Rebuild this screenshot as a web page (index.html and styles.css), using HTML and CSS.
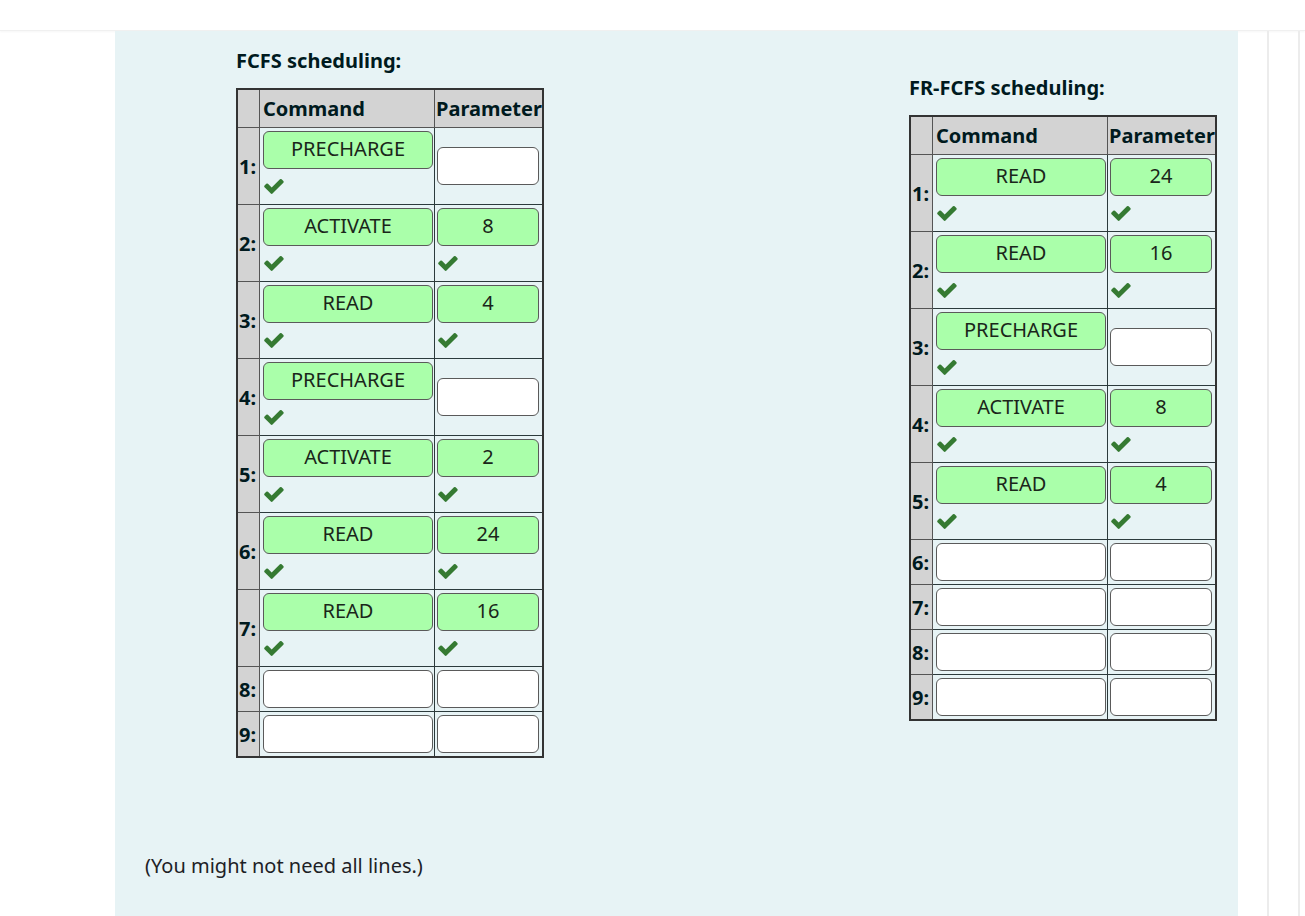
FILE: index.html
```html
<!DOCTYPE html>
<html lang="en">
<head>
<meta charset="utf-8">
<title>Scheduling</title>
<link rel="stylesheet" href="styles.css">
</head>
<body>
<svg class="defs" width="0" height="0" aria-hidden="true">
  <symbol id="chk" viewBox="120 260 1560 1270">
    <path d="M1671 566q0 40-28 68l-724 724-136 136q-28 28-68 28t-68-28l-136-136-362-362q-28-28-28-68t28-68l136-136q28-28 68-28t68 28l294 295 656-657q28-28 68-28t68 28l136 136q28 28 28 68z"/>
  </symbol>
</svg>
<div class="topbar"></div>
<div class="main">
  <div class="gutter"></div>
  <div class="panel">
    <div class="blocks">
      <div class="block block-left">
        <div class="title">FCFS scheduling:</div>
        <table class="sched">
          <tr><th class="num"></th><th class="cmdh">Command</th><th class="parh">Parameter</th></tr>
          <tr><td class="num">1:</td>
            <td class="cmd"><div class="inp ok">PRECHARGE</div><div class="chk"><svg><use href="#chk"/></svg></div></td>
            <td class="par"><div class="inp"></div></td></tr>
          <tr><td class="num">2:</td>
            <td class="cmd"><div class="inp ok">ACTIVATE</div><div class="chk"><svg><use href="#chk"/></svg></div></td>
            <td class="par"><div class="inp ok">8</div><div class="chk"><svg><use href="#chk"/></svg></div></td></tr>
          <tr><td class="num">3:</td>
            <td class="cmd"><div class="inp ok">READ</div><div class="chk"><svg><use href="#chk"/></svg></div></td>
            <td class="par"><div class="inp ok">4</div><div class="chk"><svg><use href="#chk"/></svg></div></td></tr>
          <tr><td class="num">4:</td>
            <td class="cmd"><div class="inp ok">PRECHARGE</div><div class="chk"><svg><use href="#chk"/></svg></div></td>
            <td class="par"><div class="inp"></div></td></tr>
          <tr><td class="num">5:</td>
            <td class="cmd"><div class="inp ok">ACTIVATE</div><div class="chk"><svg><use href="#chk"/></svg></div></td>
            <td class="par"><div class="inp ok">2</div><div class="chk"><svg><use href="#chk"/></svg></div></td></tr>
          <tr><td class="num">6:</td>
            <td class="cmd"><div class="inp ok">READ</div><div class="chk"><svg><use href="#chk"/></svg></div></td>
            <td class="par"><div class="inp ok">24</div><div class="chk"><svg><use href="#chk"/></svg></div></td></tr>
          <tr><td class="num">7:</td>
            <td class="cmd"><div class="inp ok">READ</div><div class="chk"><svg><use href="#chk"/></svg></div></td>
            <td class="par"><div class="inp ok">16</div><div class="chk"><svg><use href="#chk"/></svg></div></td></tr>
          <tr><td class="num">8:</td><td class="cmd"><div class="inp"></div></td><td class="par"><div class="inp"></div></td></tr>
          <tr><td class="num">9:</td><td class="cmd"><div class="inp"></div></td><td class="par"><div class="inp"></div></td></tr>
        </table>
      </div>
      <div class="block block-right">
        <div class="title">FR-FCFS scheduling:</div>
        <table class="sched">
          <tr><th class="num"></th><th class="cmdh">Command</th><th class="parh">Parameter</th></tr>
          <tr><td class="num">1:</td>
            <td class="cmd"><div class="inp ok">READ</div><div class="chk"><svg><use href="#chk"/></svg></div></td>
            <td class="par"><div class="inp ok">24</div><div class="chk"><svg><use href="#chk"/></svg></div></td></tr>
          <tr><td class="num">2:</td>
            <td class="cmd"><div class="inp ok">READ</div><div class="chk"><svg><use href="#chk"/></svg></div></td>
            <td class="par"><div class="inp ok">16</div><div class="chk"><svg><use href="#chk"/></svg></div></td></tr>
          <tr><td class="num">3:</td>
            <td class="cmd"><div class="inp ok">PRECHARGE</div><div class="chk"><svg><use href="#chk"/></svg></div></td>
            <td class="par"><div class="inp"></div></td></tr>
          <tr><td class="num">4:</td>
            <td class="cmd"><div class="inp ok">ACTIVATE</div><div class="chk"><svg><use href="#chk"/></svg></div></td>
            <td class="par"><div class="inp ok">8</div><div class="chk"><svg><use href="#chk"/></svg></div></td></tr>
          <tr><td class="num">5:</td>
            <td class="cmd"><div class="inp ok">READ</div><div class="chk"><svg><use href="#chk"/></svg></div></td>
            <td class="par"><div class="inp ok">4</div><div class="chk"><svg><use href="#chk"/></svg></div></td></tr>
          <tr><td class="num">6:</td><td class="cmd"><div class="inp"></div></td><td class="par"><div class="inp"></div></td></tr>
          <tr><td class="num">7:</td><td class="cmd"><div class="inp"></div></td><td class="par"><div class="inp"></div></td></tr>
          <tr><td class="num">8:</td><td class="cmd"><div class="inp"></div></td><td class="par"><div class="inp"></div></td></tr>
          <tr><td class="num">9:</td><td class="cmd"><div class="inp"></div></td><td class="par"><div class="inp"></div></td></tr>
        </table>
      </div>
    </div>
    <p class="note">(You might not need all lines.)</p>
  </div>
  <div class="side side-a"></div>
  <div class="side side-b"></div>
  <div class="side-end"></div>
</div>
</body>
</html>
```
FILE: styles.css
```css
html, body {
  margin: 0;
  padding: 0;
  background: #ffffff;
  height: 100%;
  overflow: hidden;
}
body {
  font-family: "Noto Sans", "Open Sans", sans-serif;
  font-size: 20px;
  color: #001a1e;
}
.defs {
  position: absolute;
  width: 0;
  height: 0;
}
.topbar {
  height: 30px;
  background: #ffffff;
  border-bottom: 1px solid #f0f0f0;
  box-shadow: 0 1px 2px rgba(0, 0, 0, 0.04);
}
.main {
  display: flex;
  height: calc(100vh - 31px);
}
.gutter {
  width: 115px;
  flex: none;
}
.panel {
  width: 1123px;
  flex: none;
  background: #e7f3f5;
  padding: 16px 30px 0 30px;
  box-sizing: border-box;
}
.side {
  flex: none;
  width: 29px;
  border-right: 2px solid #ececec;
}
.side-end {
  flex: 1;
}
.blocks {
  display: flex;
  align-items: flex-start;
}
.block-left {
  margin-left: 91px;
}
.block-right {
  margin-left: 365px;
  margin-top: 27px;
}
.title {
  font-weight: 700;
  line-height: 27px;
  margin-bottom: 14px;
}
.sched {
  border-collapse: collapse;
  border: 2px solid #333;
}
.sched th, .sched td {
  border: 1px solid #2c3a3c;
  padding: 3px 1px 3px 3px;
  vertical-align: middle;
}
.sched th {
  background: #d3d3d3;
  text-align: left;
  font-weight: 700;
  line-height: 31px;
  padding: 3px 0 3px 3px;
  border-color: #555;
}
.sched th.parh {
  padding-left: 1px;
}
.sched td.num, .sched th.num {
  background: #d3d3d3;
  font-weight: 700;
  min-width: 20px;
  width: 20px;
  padding: 0 0 0 1px;
  border-color: #555;
}
.sched td.par {
  padding: 3px 3px 3px 2px;
}
.inp {
  box-sizing: border-box;
  height: 38px;
  border: 1px solid #5a5a5a;
  border-radius: 6px;
  background: #ffffff;
  text-align: center;
  line-height: 34px;
  color: #1a261a;
}
.inp.ok {
  background: #aaffaa;
}
.cmd .inp {
  width: 170px;
}
.par .inp {
  width: 102px;
}
.chk {
  height: 32px;
  display: flex;
  align-items: center;
  padding-left: 1px;
  padding-top: 2px;
  box-sizing: border-box;
}
.chk svg {
  width: 20px;
  height: 16px;
  fill: #357a32;
}
.note {
  margin: 94px 0 0 0;
  line-height: 27px;
  color: #1d2125;
}
```
